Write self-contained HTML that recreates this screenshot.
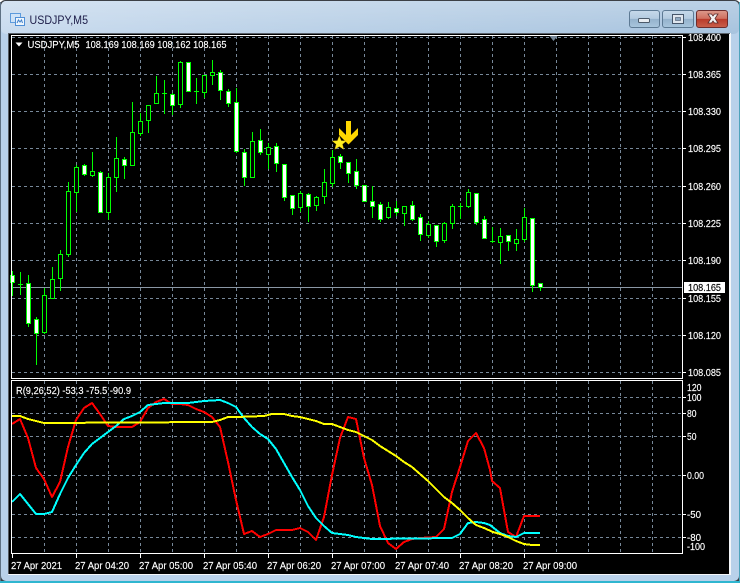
<!DOCTYPE html>
<html>
<head>
<meta charset="utf-8">
<style>
html,body{margin:0;padding:0;width:740px;height:583px;overflow:hidden;background:#b9d1ea}
svg{position:absolute;left:0;top:0;display:block}
text{font-family:"Liberation Sans",sans-serif;font-size:10.4px;fill:#fff;stroke:#fff;stroke-width:.15px}
.c{shape-rendering:crispEdges}
</style>
</head>
<body>
<svg width="740" height="583" viewBox="0 0 740 583" xmlns="http://www.w3.org/2000/svg">
<defs>
<linearGradient id="tb" x1="0" y1="0" x2="1" y2="0"><stop offset="0" stop-color="#c9dbee"/><stop offset=".35" stop-color="#bcd2e8"/><stop offset="1" stop-color="#a7c3de"/></linearGradient>
<linearGradient id="tb2" x1="0" y1="0" x2="0" y2="1"><stop offset="0" stop-color="#fff" stop-opacity=".22"/><stop offset="1" stop-color="#fff" stop-opacity="0"/></linearGradient>
<linearGradient id="bn" x1="0" y1="0" x2="0" y2="1"><stop offset="0" stop-color="#c6d9ea"/><stop offset=".48" stop-color="#b3cbe0"/><stop offset=".5" stop-color="#94b2cc"/><stop offset="1" stop-color="#a9c6dd"/></linearGradient>
<linearGradient id="cl" x1="0" y1="0" x2="0" y2="1"><stop offset="0" stop-color="#dc9a8c"/><stop offset=".48" stop-color="#cf6f5f"/><stop offset=".5" stop-color="#b93a2a"/><stop offset="1" stop-color="#c9604c"/></linearGradient>
</defs>
<!-- window frame -->
<rect x="0" y="0" width="740" height="583" fill="#fff"/>
<rect x="0" y="0" width="740" height="583" rx="5" fill="#3c4046"/>
<rect x="1" y="1" width="738" height="580" rx="5" fill="#b9d1ea"/>
<rect x="1" y="1" width="738" height="33" rx="5" fill="url(#tb)"/>
<rect x="1" y="1" width="738" height="33" rx="5" fill="url(#tb2)"/>
<rect x="0" y="581" width="740" height="2" fill="#2fb6d0"/>
<rect x="0" y="2" width="1" height="579" fill="#5f7183"/>
<rect x="739" y="2" width="1" height="579" fill="#4fa3bb"/>
<!-- icon -->
<g class="c">
<rect x="10.5" y="13.5" width="10" height="9" fill="#cfe3f7" stroke="#5d9bdc"/>
<rect x="15.5" y="17.5" width="9" height="8" fill="#eef6fd" stroke="#4f8fd6"/>
</g>
<path d="M17 23l1.500-3 1.500 2 1.500-2 1 3" fill="none" stroke="#3f7fc8" stroke-width="1"/>
<text x="29.500" y="24" style="font-size:11.5px;fill:#1c1c48;stroke:none" textLength="58.5" lengthAdjust="spacingAndGlyphs">USDJPY,M5</text>
<!-- buttons -->
<rect x="629.500" y="10.500" width="30" height="17" rx="2.500" fill="url(#bn)" stroke="#5d7a94"/>
<rect x="662.500" y="10.500" width="31" height="17" rx="2.500" fill="url(#bn)" stroke="#5d7a94"/>
<rect x="696.500" y="10.500" width="31" height="17" rx="2.500" fill="url(#cl)" stroke="#6e2d2d"/>
<rect x="638.500" y="18.500" width="11" height="4" rx="1" fill="#e8edf2" stroke="#4b5a6a"/>
<rect x="672.500" y="14.500" width="11" height="9" fill="#dfe6ee" stroke="#46566a"/>
<rect x="675.500" y="17.500" width="5" height="3" fill="#8ea9c2" stroke="#46566a" stroke-width=".6"/>
<path d="M708 14h3.500l1.500 2 1.500-2h3.500l-3 4.500 3 4.500h-3.500l-1.500-2-1.500 2h-3.500l3-4.500z" fill="#f3f3f3" stroke="#5b2b2b" stroke-width=".8"/>
<!-- client area -->
<rect x="8" y="33" width="723" height="542" fill="#f4f6f9"/>
<rect x="8" y="33" width="1" height="541" fill="#555b62"/>
<rect x="8" y="33" width="722" height="1" fill="#59616a"/>
<rect x="9" y="34" width="720" height="540" fill="#000"/>

<!-- grid -->
<g class="c" stroke="#778899" stroke-width="1" fill="none" stroke-dasharray="3 3">
<path d="M12 37.500H682M12 74.500H682M12 111.500H682M12 148.500H682M12 186.500H682M12 223.500H682M12 260.500H682M12 298.500H682M12 335.500H682M12 372.500H682"/>
<path d="M44.500 36V378M76.500 36V378M108.500 36V378M140.500 36V378M172.500 36V378M204.500 36V378M236.500 36V378M268.500 36V378M300.500 36V378M332.500 36V378M364.500 36V378M396.500 36V378M428.500 36V378M460.500 36V378M492.500 36V378M524.500 36V378M556.500 36V378M588.500 36V378M620.500 36V378M652.500 36V378"/>
<path d="M12 397.500H682M12 413.500H682M12 436.500H682M12 475.500H682M12 514.500H682M12 537.500H682"/>
<path d="M44.500 381V553M76.500 381V553M108.500 381V553M140.500 381V553M172.500 381V553M204.500 381V553M236.500 381V553M268.500 381V553M300.500 381V553M332.500 381V553M364.500 381V553M396.500 381V553M428.500 381V553M460.500 381V553M492.500 381V553M524.500 381V553M556.500 381V553M588.500 381V553M620.500 381V553M652.500 381V553"/>
</g>
<rect class="c" x="12" y="287" width="670" height="1" fill="#8a97a5"/>
<path d="M549.500 36h8l-4 5z" fill="#778899"/>

<!-- candles -->
<g class="c" stroke="#00ff00" stroke-width="1">
<path fill="none" d="M12.500 271V296M20.500 272V295M28.500 275V327M36.500 317V365M44.500 288V334M52.500 267V298M60.500 250V291M68.500 182V257M76.500 165V212M84.500 164V176M92.500 152V177M100.500 171V213M108.500 173V220M116.500 137V192M124.500 157V179M132.500 102V165M140.500 113V136M148.500 105V133M156.500 76V103M164.500 80V114M172.500 93V115M180.500 61V108M188.500 62V91M196.500 78V104M204.500 75V98M212.500 60V85M220.500 70V100M228.500 89V107M236.500 88V153M244.500 149V186M252.500 132V177M260.500 129V155M268.500 143V169M276.500 143V172M284.500 164V201M292.500 195V215M300.500 191V212M308.500 193V222M316.500 196V211M324.500 169V204M332.500 150V187M340.500 154V169M348.500 162V183M356.500 159V189M364.500 185V201M372.500 186V218M380.500 202V222M388.500 202V219M396.500 201V216M404.500 206V226M412.500 201V221M420.500 214V241M428.500 221V238M436.500 225V247M444.500 222V243M452.500 204V229M460.500 203V219M468.500 189V208M476.500 193V225M484.500 216V239M492.500 227V243M500.500 228V264M508.500 235V251M516.500 229V251M524.500 208V242M532.500 218V292M540.500 283V291"/>
<path fill="none" d="M18 284.500h5M162 93.500h5M194 91.500h5M458 206.500h5M490 241.500h5"/>
<path fill="#000" d="M42.500 295.500h4v37h-4zM50.500 279.500h4v19h-4zM58.500 254.500h4v24h-4zM66.500 191.500h4v63h-4zM74.500 167.500h4v25h-4zM90.500 171.500h4v4h-4zM106.500 177.500h4v35h-4zM114.500 158.500h4v19h-4zM130.500 132.500h4v33h-4zM138.500 121.500h4v12h-4zM146.500 105.500h4v15h-4zM154.500 93.500h4v10h-4zM178.500 62.500h4v42h-4zM202.500 75.500h4v17h-4zM210.500 72.500h4v3h-4zM250.500 141.500h4v36h-4zM266.500 147.500h4v7h-4zM298.500 193.500h4v14h-4zM314.500 197.500h4v8h-4zM322.500 182.500h4v14h-4zM330.500 157.500h4v26h-4zM386.500 207.500h4v10h-4zM402.500 206.500h4v7h-4zM426.500 224.500h4v11h-4zM442.500 223.500h4v17h-4zM450.500 206.500h4v17h-4zM466.500 192.500h4v14h-4zM498.500 236.500h4v6h-4zM514.500 239.500h4v4h-4zM522.500 217.500h4v22h-4z"/>
<path fill="#fff" d="M10.500 275.500h4v7h-4zM26.500 283.500h4v40h-4zM34.500 319.500h4v14h-4zM82.500 165.500h4v9h-4zM98.500 172.500h4v40h-4zM122.500 159.500h4v6h-4zM170.500 94.500h4v11h-4zM186.500 62.500h4v29h-4zM218.500 72.500h4v18h-4zM226.500 91.500h4v12h-4zM234.500 102.500h4v49h-4zM242.500 152.500h4v25h-4zM258.500 140.500h4v12h-4zM274.500 146.500h4v17h-4zM282.500 164.500h4v33h-4zM290.500 195.500h4v13h-4zM306.500 194.500h4v12h-4zM338.500 156.500h4v6h-4zM346.500 162.500h4v11h-4zM354.500 171.500h4v14h-4zM362.500 185.500h4v16h-4zM370.500 201.500h4v5h-4zM378.500 204.500h4v15h-4zM394.500 208.500h4v4h-4zM410.500 205.500h4v14h-4zM418.500 217.500h4v17h-4zM434.500 225.500h4v16h-4zM474.500 193.500h4v29h-4zM482.500 219.500h4v19h-4zM506.500 235.500h4v6h-4zM530.500 218.500h4v67h-4zM538.500 283.500h4v4h-4z"/>
</g>

<!-- arrow and star -->
<path d="M346 121h5v14l7-7v7l-9.500 9.500-9.500-9.500v-7l7 7z" fill="#ffd800"/>
<path d="M339.300 136l1.900 4.700 5.100.3-3.900 3.200 1.300 5-4.400-2.700-4.400 2.700 1.300-5-3.900-3.200 5.100-.3z" fill="#ffee22" stroke="#e0b000" stroke-width=".4"/>

<!-- indicators -->
<g fill="none" stroke-width="2" stroke-linejoin="round" class="c">
<path stroke="#ff0000" d="M12 424L20 419 28 438 36 468 44 479 52 497 60 482 68 447 76 420 84 408 92 403 100 414 108 426 116 427 132 427 140 422 148 408 156 402 164 399 172 404 180 404 188 405 196 409 204 412 212 417 220 427 228 462 236 500 244 534 252 531 260 537 268 534 276 530 292 530 300 528 308 532 316 540 324 517 332 475 340 438 348 417 356 419 364 458 372 485 380 526 388 543 396 549 404 542 412 539 420 538 436 537 444 529 452 492 460 467 468 441 476 433 484 448 490 470 492 481 500 488 508 532 516 537 524 516 540 516"/>
<path stroke="#00ffff" d="M12 502L20 494 28 504 36 514 44 514 52 512 60 494 68 478 76 465 84 453 92 444 100 438 108 432 116 426 124 419 132 416 140 412 148 405 156 404 164 403 188 403 196 402 204 401 220 400 228 403 236 407 244 418 252 427 260 434 268 439 276 449 284 463 292 477 300 490 308 506 316 518 324 526 332 533 340 534 348 535 356 537 372 539 452 538 460 534 468 523 476 522 484 523 490 525 500 533 508 536 516 537 524 533 532 533 540 533"/>
<path stroke="#ffff00" d="M12 416L20 416 28 419 36 421 44 423 212 422 220 420 228 417 236 417 264 416 272 414 284 414 292 416 300 417 308 419 316 421 324 424 332 424 340 427 348 430 356 432 364 436 372 440 380 446 388 451 396 456 404 462 412 467 420 474 428 481 436 489 444 497 452 503 460 510 468 518 476 525 484 528 493 532 500 534 508 537 516 541 524 544 532 545 540 545"/>
</g>

<!-- frames and ticks -->
<g class="c" fill="none" stroke="#fff" stroke-width="1">
<rect x="11.500" y="35.500" width="671" height="343"/>
<rect x="11.500" y="380.500" width="671" height="173"/>
<path d="M683 37.500h3M683 74.500h3M683 111.500h3M683 148.500h3M683 186.500h3M683 223.500h3M683 260.500h3M683 298.500h3M683 335.500h3M683 372.500h3"/>
<path d="M683 397.500h3M683 413.500h3M683 436.500h3M683 475.500h3M683 514.500h3M683 537.500h3"/>
<path d="M12.500 554v4M76.500 554v4M140.500 554v4M204.500 554v4M268.500 554v4M332.500 554v4M396.500 554v4M460.500 554v4M524.500 554v4"/>
</g>

<!-- header text -->
<path d="M15.500 42.500h7l-3.500 4z" fill="#fff"/>
<text x="27.500" y="48" textLength="52" lengthAdjust="spacingAndGlyphs">USDJPY,M5</text>
<text x="85.500" y="48" textLength="141" lengthAdjust="spacingAndGlyphs">108.169 108.169 108.162 108.165</text>
<text x="16" y="394" textLength="115" lengthAdjust="spacingAndGlyphs">R(9,26,52) -53.3 -75.5 -90.9</text>

<!-- price labels -->
<text x="688" y="41" textLength="33" lengthAdjust="spacingAndGlyphs">108.400</text>
<text x="688" y="78" textLength="33" lengthAdjust="spacingAndGlyphs">108.365</text>
<text x="688" y="115" textLength="33" lengthAdjust="spacingAndGlyphs">108.330</text>
<text x="688" y="152" textLength="33" lengthAdjust="spacingAndGlyphs">108.295</text>
<text x="688" y="190" textLength="33" lengthAdjust="spacingAndGlyphs">108.260</text>
<text x="688" y="227" textLength="33" lengthAdjust="spacingAndGlyphs">108.225</text>
<text x="688" y="264" textLength="33" lengthAdjust="spacingAndGlyphs">108.190</text>
<text x="688" y="302" textLength="33" lengthAdjust="spacingAndGlyphs">108.155</text>
<text x="688" y="339" textLength="33" lengthAdjust="spacingAndGlyphs">108.120</text>
<text x="688" y="376" textLength="33" lengthAdjust="spacingAndGlyphs">108.085</text>
<rect x="684" y="282" width="41" height="11" fill="#fff"/>
<text x="688" y="291" textLength="33" lengthAdjust="spacingAndGlyphs" style="fill:#000;stroke:#000">108.165</text>

<text x="687" y="391" textLength="14.500" lengthAdjust="spacingAndGlyphs">120</text>
<text x="687" y="401" textLength="14.500" lengthAdjust="spacingAndGlyphs">100</text>
<text x="687" y="417" textLength="9.500" lengthAdjust="spacingAndGlyphs">80</text>
<text x="687" y="440" textLength="9.500" lengthAdjust="spacingAndGlyphs">50</text>
<text x="687" y="479" textLength="17" lengthAdjust="spacingAndGlyphs">0.00</text>
<text x="687" y="518" textLength="14" lengthAdjust="spacingAndGlyphs">-50</text>
<text x="687" y="541" textLength="14" lengthAdjust="spacingAndGlyphs">-80</text>
<text x="687" y="550" textLength="18" lengthAdjust="spacingAndGlyphs">-100</text>

<!-- time labels -->
<text x="11" y="569" textLength="51" lengthAdjust="spacingAndGlyphs">27 Apr 2021</text>
<text x="75" y="569" textLength="54" lengthAdjust="spacingAndGlyphs">27 Apr 04:20</text>
<text x="139" y="569" textLength="54" lengthAdjust="spacingAndGlyphs">27 Apr 05:00</text>
<text x="203" y="569" textLength="54" lengthAdjust="spacingAndGlyphs">27 Apr 05:40</text>
<text x="267" y="569" textLength="54" lengthAdjust="spacingAndGlyphs">27 Apr 06:20</text>
<text x="331" y="569" textLength="54" lengthAdjust="spacingAndGlyphs">27 Apr 07:00</text>
<text x="395" y="569" textLength="54" lengthAdjust="spacingAndGlyphs">27 Apr 07:40</text>
<text x="459" y="569" textLength="54" lengthAdjust="spacingAndGlyphs">27 Apr 08:20</text>
<text x="523" y="569" textLength="54" lengthAdjust="spacingAndGlyphs">27 Apr 09:00</text>
</svg>
</body>
</html>
